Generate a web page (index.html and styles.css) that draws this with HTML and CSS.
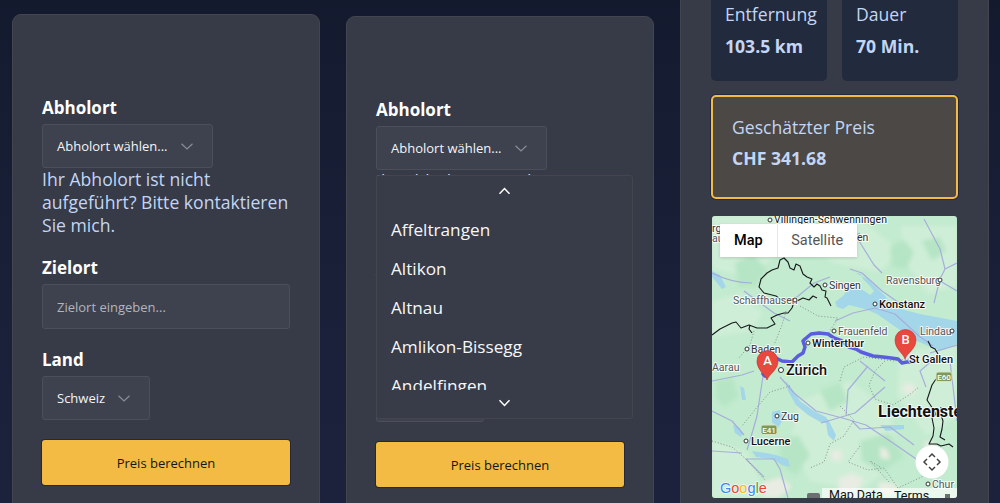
FILE: index.html
```html
<!DOCTYPE html>
<html lang="de">
<head>
<meta charset="utf-8">
<title>Preis berechnen</title>
<link rel="stylesheet" href="styles.css">
</head>
<body>
<main class="page">
  <section class="card card-a">
    <form class="form">
      <div class="field">
        <label class="label">Abholort</label>
        <div class="select select-wide">Abholort wählen...<svg class="chev" viewBox="0 0 12 7"><path d="M.5.7 6 6l5.500-5.300"/></svg></div>
        <p class="hint">Ihr Abholort ist nicht aufgeführt? Bitte kontaktieren Sie mich.</p>
      </div>
      <div class="field">
        <label class="label">Zielort</label>
        <div class="input">Zielort eingeben...</div>
      </div>
      <div class="field">
        <label class="label">Land</label>
        <div class="select">Schweiz<svg class="chev" viewBox="0 0 12 7"><path d="M.5.7 6 6l5.500-5.300"/></svg></div>
      </div>
      <button class="submit" type="button">Preis berechnen</button>
    </form>
  </section>

  <section class="card card-b">
    <form class="form">
      <div class="field">
        <label class="label">Abholort</label>
        <div class="select select-wide">Abholort wählen...<svg class="chev" viewBox="0 0 12 7"><path d="M.5.7 6 6l5.500-5.300"/></svg></div>
        <p class="hint">Ihr Abholort ist nicht aufgeführt? Bitte kontaktieren Sie mich.</p>
      </div>
      <div class="field">
        <label class="label">Zielort</label>
        <div class="input">Zielort eingeben...</div>
      </div>
      <div class="field">
        <label class="label">Land</label>
        <div class="select">Schweiz<svg class="chev" viewBox="0 0 12 7"><path d="M.5.7 6 6l5.500-5.300"/></svg></div>
      </div>
      <button class="submit" type="button">Preis berechnen</button>
    </form>
    <div class="dropdown">
      <div class="scroll-btn"><svg class="scroll-icon" viewBox="0 0 12 8"><path d="M1 6.800 6 1.500l5 5.300"/></svg></div>
      <ul class="options">
        <li>Affeltrangen</li>
        <li>Altikon</li>
        <li>Altnau</li>
        <li>Amlikon-Bissegg</li>
        <li>Andelfingen</li>
      </ul>
      <div class="scroll-btn scroll-btn-down"><svg class="scroll-icon" viewBox="0 0 12 8"><path d="M1 1.200l5 5.300 5-5.300"/></svg></div>
    </div>
  </section>

  <section class="card card-c">
    <div class="stats">
      <div class="stat"><div class="stat-name">Entfernung</div><div class="stat-value">103.5 km</div></div>
      <div class="stat"><div class="stat-name">Dauer</div><div class="stat-value">70 Min.</div></div>
    </div>
    <div class="price">
      <div class="stat-name">Geschätzter Preis</div>
      <div class="stat-value">CHF 341.68</div>
    </div>
    <div class="map">
      <svg class="map-canvas" viewBox="712 215 245 282" aria-label="Karte">
        <rect class="m-base" x="712" y="215" width="245" height="282"/>
        <g class="m-soft">
          <path class="m-light" d="M712 215h90l-10 30-30 20-25 8-25-5zM712 300l30-8 20 20-10 18-40 6zM800 225l60-6 40 30-20 22-50-10zM900 225h57v60l-30 8-20-30zM712 440l35 10 20 47h-55zM800 400l50-20 40 30 10 50-40 30-50-10-20-40zM900 350l57-5v70l-30 20-30-40z"/>
          <path class="m-dark" d="M735 262l18-8 14 14-10 16-18 2zM890 245l14-6 10 12-8 18-14-4zM922 240l18-4 6 14-14 10zM780 440l18-6 12 20-14 20-16-10zM860 440l30-8 14 24-22 16-20-12zM820 390l20-8 8 18-18 10zM716 380l16-4 6 20-14 10-8-10z"/>
          <path class="m-rock" d="M903 384l8-2 6 6-6 6-8-3zM880 445l8 4 2 10-10-2zM925 440l10 3 5 12-10 6-6-8zM838 478l14-6 12 6-8 14-16 2zM762 482l18-6 12 10-14 11h-14zM830 450l10-2 3 10-10 3zM880 480l18 4-4 10-16-4z"/>
        </g>
        <path class="lake-main" d="M855 272L868 278L885 295L893 306L920 313L957 320L957 343L940 350L917 340L897 327L877 313L865 308L849 304L843 308L837 306L835 301L843 295L849 287L857 286L866 291L870 294L874 290L869 284L863 278L861 273Z"/>
        <path class="lake-main" d="M712 276L712 270L720 274L726 286L722 288ZM786 380L792 388L800 400L814 410L826 416L830 422L822 422L808 414L796 404L788 390ZM772 411L780 409L784 417L778 427L772 421ZM733 424L739 426L743 432L741 436L735 432ZM752 450L766 452L776 454L788 458L790 466L782 464L772 458L756 456ZM880 424L904 424L904 428L886 430ZM826 422L830 422L836 434L834 440L828 434ZM740 385L744 387L746 399L742 399Z"/>
        <g class="m-road">
          <path d="M712 272c12 6 24 10 40 10M744 290l30 22 16 8M792 300l22-18 16-6M860 232l-24 12-30 6M830 218l24 14 20 32 8 8M924 218l16 30 5 20-5 10-6 24M957 262l-12 6M940 280l17 10M757 361l6 14-6 40-4 14-6 20M780 376l14 16 22 18 30 8 20 6 24 16 32 22M712 450l30 2M712 410l20 10 12 14M846 415l2-26 20-24M885 386l-30 26-34 10M712 380l30-6 12-4M764 476l-18-18 28 0 6 10 8 29M852 420l8 8 30-2 24 18M860 360l25 20M926 386l-6-16 14-12M930 352l27-8M950 360l7 60M850 268l12 4 20 18 20 14M835 320l18-8 22-5 20 6 24 22 14 10"/>
        </g>
        <g class="m-dots">
          <path d="M885 360l-10 10-6 14 6 14 18 6 16-10 10-8M840 380l4-14 20-10 30 4 16-2M712 440l20 6 14 12 20 22M840 405l14 14-10 16-14 8-6 18-14 6M860 445l-12 16 20 8 16-2 14 20 30-14 12 2M880 466l-10-6 20 22M786 310l-4 14-8 20M800 305l18 10 20 2-10 16M790 385l-20 6-12 14-16 20M754 330l-4 14-12 14"/>
        </g>
        <g class="m-border">
          <path d="M712 334l8-6 12-6 4-1 5 6 8-3 8 3h10l8-4-4-6 6-3 7-2 4 0 4-5 2-6-6-3-8 0-4-3-12-3-5-6 2-8 6-6 5-3 6-2 2-8 4-2 4 4 2 6 4 2 2-6 4 2 3 8 4 3 5 2-2 4 4 4 3-3 3 2 2 4 4 1-1 6 2 1 2 4 2 4"/>
          <path d="M797 300l6-3 6 2 4-4 4 2M752 332l-3-4 1-4M928 340l3 6 4 2 3 5"/>
          <path d="M936 378l-4 6-3 9-2 6 4 6 5 8-4 4 2 10-1 8-4 8 8 0 4 2 8-2 4 3M941 406l0 8 2 6-1 8-2 8 5 3"/>
        </g>
        <path class="m-route" d="M763 373l2 2 6-16 5-2 6 3 10 1 6-6 5-3 2-6-2-6 2-2 6-5 8-1 9 1 6 4 8 3 7 6 7 2 5 3 12 4 10 1 8 1 7 1 4 4 5-1 6 0 3-2"/>
        <text class="t t-s t-dark" x="712" y="231">rg</text>
        <text class="t t-s t-mid" x="712" y="241">au</text>
        <text class="t t-s t-dark" x="857" y="240">en</text>
        <circle class="dot" cx="770" cy="219" r="2"/><text class="t t-s t-black" x="774" y="222" textLength="113">Villingen-Schwenningen</text>
        <circle class="dot" cx="825" cy="284" r="2"/><text class="t t-s t-dark" x="829" y="288">Singen</text>
        <text class="t t-s t-mid" x="886" y="283">Ravensburg</text><circle class="dot" cx="940" cy="279" r="2"/>
        <circle class="dot" cx="875" cy="303" r="2"/><text class="t t-m t-black" x="879" y="307">Konstanz</text>
        <text class="t t-s t-mid" x="733" y="303">Schaffhausen</text><circle class="dot" cx="795" cy="299" r="2"/>
        <circle class="dot" cx="834" cy="330" r="2"/><text class="t t-s t-mid" x="838" y="334">Frauenfeld</text>
        <text class="t t-s t-mid" x="920" y="334">Lindau</text><circle class="dot" cx="952" cy="330" r="2"/>
        <circle class="dot" cx="808" cy="342" r="2"/><text class="t t-m t-black" x="812" y="346">Winterthur</text>
        <circle class="dot" cx="747" cy="348" r="2"/><text class="t t-s t-dark" x="751" y="352">Baden</text>
        <text class="t t-s t-mid" x="712" y="370">Aarau</text>
        <circle class="dot" cx="781" cy="369" r="2.5"/><text class="t t-l t-black" x="786" y="374">Zürich</text>
        <text class="t t-m t-black" x="909" y="362">St Gallen</text>
        <circle class="dot" cx="777" cy="415" r="2"/><text class="t t-s t-dark" x="781" y="419">Zug</text>
        <circle class="dot" cx="746" cy="440" r="2"/><text class="t t-m t-black" x="751" y="444">Lucerne</text>
        <text class="t t-xl t-black" x="878" y="416">Liechtenstein</text>
        <circle class="dot" cx="928" cy="483" r="2"/><text class="t t-s t-mid" x="932" y="487">Chur</text>
        <rect class="shield" x="761" y="424" width="16" height="9.5" rx="2"/><text class="shield-t" x="769" y="431.5">E41</text>
        <rect class="shield" x="936" y="371" width="16" height="9.5" rx="2"/><text class="shield-t" x="944" y="378.5">E60</text>
        <path class="pin" d="M767 379c-2-6-10-10-10-19a10.500 10.500 0 0 1 21 0c0 9-9 13-11 19z"/>
        <text class="pin-t" x="767.5" y="364">A</text>
        <path class="pin" d="M905 358c-2-6-10-10-10-19a10.500 10.500 0 0 1 21 0c0 9-9 13-11 19z"/>
        <text class="pin-t" x="905.5" y="343">B</text>
        <text class="google" x="720" y="492"><tspan class="g-b">G</tspan><tspan class="g-r">o</tspan><tspan class="g-y">o</tspan><tspan class="g-b">g</tspan><tspan class="g-g">l</tspan><tspan class="g-r">e</tspan></text>
        <rect class="attr" x="822" y="487" width="135" height="10"/>
        <path class="kbd" d="M807 497v-3q0-2 2-2h9q2 0 2 2v3z"/>
        <text class="attr-t" x="829" y="498">Map Data</text>
        <text class="attr-t" x="894" y="499">Terms</text>
        <rect class="kbd" x="945" y="493" width="5" height="4"/>
        <circle class="cam" cx="932" cy="461" r="16.5"/>
        <path class="cam-i" d="M929 456l3-3 3 3M929 466l3 3 3-3M927 458l-3 3 3 3M937 458l3 3-3 3"/>
      </svg>
      <div class="map-type">
        <span class="map-tab map-tab-on">Map</span>
        <span class="map-tab">Satellite</span>
      </div>
    </div>
  </section>
</main>
</body>
</html>
```
FILE: styles.css
```css
* { box-sizing: border-box; }
html, body { margin: 0; height: 503px; overflow: hidden; }
body {
  background: linear-gradient(180deg, #141a2e 0, #1a2038 60%, #1c223c 100%);
  font-family: "Open Sans", "Noto Sans", sans-serif;
  color: #fff;
}
.page { display: flex; gap: 26px; padding-left: 12px; align-items: flex-start; }
.card {
  position: relative;
  width: 308px;
  background: #373a47;
  border: 1px solid #44464f;
  border-radius: 9px;
  padding: 0 29px;
  height: 600px;
  flex: none;
}
.card-a { margin-top: 14px; padding-top: 82px; }
.card-b { margin-top: 16px; padding-top: 82px; }
.card-c { margin-top: -40px; width: 309px; padding: 26px 30px 0; height: 700px; }

.form { display: flex; flex-direction: column; }
.field { display: flex; flex-direction: column; align-items: flex-start; margin-bottom: 20px; }
.label { font-size: 17px; line-height: 22px; font-weight: 700; margin-bottom: 5px; color: #fff; }
.select, .input {
  height: 44px;
  border: 1px solid #4c4f5b;
  border-radius: 3px;
  background: #3e414e;
  font-size: 13px;
  display: flex;
  align-items: center;
  padding: 0 14px;
}
.select { gap: 13px; color: #f4f5f7; padding-right: 19px; }
.select-wide { gap: 14px; }
.input { width: 248px; height: 45px; color: #b3b5bc; }
.chev { width: 12px; height: 7px; fill: none; stroke: #8b8d97; stroke-width: 1.2; flex: none; }
.hint { margin: 0; font-size: 17.6px; line-height: 23px; color: #c3d6f3; }
.submit {
  width: 248px;
  height: 45px;
  background: #f4bb44;
  border: 0;
  border-radius: 3px;
  color: #15151a;
  font: 400 13px "Open Sans", sans-serif;
  box-shadow: 0 0 0 1px #23283f;
}

.dropdown {
  position: absolute;
  left: 29px;
  top: 158px;
  width: 257px;
  height: 244px;
  background: #383b48;
  border: 1px solid #45454d;
  border-radius: 3px;
  display: flex;
  flex-direction: column;
}
.scroll-btn { height: 34px; flex: none; display: flex; align-items: center; justify-content: center; padding-bottom: 5px; }
.scroll-btn-down { height: 28px; padding-bottom: 2px; }
.scroll-icon { width: 13px; height: 8px; fill: none; stroke: #fff; stroke-width: 1.5; }
.options { list-style: none; margin: 0; padding: 0 14px; flex: 1; overflow: hidden; }
.options li { height: 39px; line-height: 39px; font-size: 17.2px; color: #f6f7f9; }

.stats { display: flex; gap: 15px; margin-bottom: 14px; }
.stat {
  flex: 1 1 0;
  min-width: 0;
  height: 94px;
  background: #222a3e;
  border-radius: 5px;
  padding: 15px 14px 0;
}
.stat-name { font-size: 17.6px; line-height: 24px; color: #c3d6f3; }
.stat-value { font-size: 17.6px; line-height: 24px; font-weight: 700; color: #c3d6f3; margin-top: 8px; }
.price {
  height: 104px;
  background: #4c4845;
  border: 2px solid #f4bb44;
  border-radius: 5px;
  padding: 18px 19px 0;
  margin-bottom: 17px;
  box-shadow: 0 0 0 1px #23283f;
}
.price .stat-value { margin-top: 7px; }

.map { position: relative; margin-left: 1px; width: 245px; height: 282px; border-radius: 3px; overflow: hidden; }
.map-canvas { display: block; width: 245px; height: 282px; }
.map-type {
  position: absolute;
  left: 8px;
  top: 8px;
  height: 33px;
  background: #fff;
  display: flex;
  box-shadow: 0 1px 3px rgba(0,0,0,.15);
}
.map-tab {
  font: 400 14.5px/33px Roboto, sans-serif;
  color: #565656;
  padding: 0 13.5px;
  border-left: 1px solid #e6e6e6;
}
.map-tab-on { font-weight: 500; color: #000; border-left: 0; padding: 0 14px; }

.m-base { fill: #c3ebcf; }
.m-soft { filter: blur(2px); }
.m-light { fill: #cfeed7; }
.m-dark { fill: #b5e5c4; }
.m-rock { fill: #e8ece2; }
.lake-main { fill: #a4d6ea; }
.m-road { fill: none; stroke: #a6aedb; stroke-width: 1.2; stroke-linejoin: round; }
.m-dots { fill: none; stroke: #85908f; stroke-width: 1; stroke-dasharray: 1 2; }
.m-border { fill: none; stroke: #17191c; stroke-width: 1.1; stroke-linejoin: round; }
.m-route { fill: none; stroke: #5a5ddc; stroke-width: 3.5; stroke-linejoin: round; stroke-linecap: round; }
.t { font-family: Roboto, sans-serif; paint-order: stroke; stroke: rgba(255,255,255,.85); stroke-width: 2px; stroke-linejoin: round; }
.t-s { font-size: 10.5px; }
.t-m { font-size: 11px; font-weight: 500; }
.t-l { font-size: 14.5px; font-weight: 500; }
.t-xl { font-size: 16px; font-weight: 700; }
.t-black { fill: #111; }
.t-dark { fill: #333; }
.t-mid { fill: #555; }
.dot { fill: #fff; stroke: #333; stroke-width: 1; }
.shield { fill: #7c9a58; stroke: #d8e4c2; stroke-width: 1; }
.shield-t { font: 500 8px Roboto, sans-serif; fill: #fff; text-anchor: middle; }
.pin { fill: #e8483d; stroke: #c0332b; stroke-width: .6; }
.pin-t { font: 500 13px Roboto, sans-serif; fill: #fff; text-anchor: middle; }
.google { font: 400 14.5px "Liberation Sans", sans-serif; paint-order: stroke; stroke: rgba(255,255,255,.7); stroke-width: 1.5px; }
.g-b { fill: #4285f4; }
.g-r { fill: #ea4335; }
.g-y { fill: #fbbc05; }
.g-g { fill: #34a853; }
.attr { fill: rgba(255,255,255,.65); }
.attr-t { font: 400 12.5px Roboto, sans-serif; fill: #111; }
.kbd { fill: #6b6f72; }
.cam { fill: #fff; }
.cam-i { fill: none; stroke: #444; stroke-width: 1.5; }
```
